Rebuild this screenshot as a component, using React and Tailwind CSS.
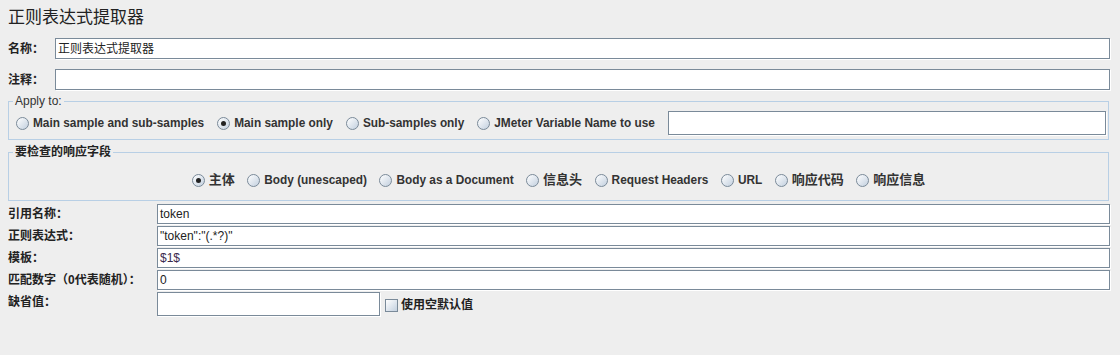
import React from "react";

const FONT = "font-['Liberation_Sans','Noto_Sans_CJK_SC',sans-serif]";

function Radio({ checked }) {
  return (
    <span className="inline-flex w-[13px] h-[13px] shrink-0 items-center justify-center rounded-full border border-[#7a8a99] bg-linear-to-br from-white to-[#c3d0df]">
      {checked && <span className="w-[5px] h-[5px] rounded-full bg-[#222]" />}
    </span>
  );
}

function RadioItem({ checked, children, size = "text-[11.85px]" }) {
  return (
    <label className={`flex items-center gap-[4px] ${size} font-bold text-[#333] leading-[14px] whitespace-nowrap`}>
      <Radio checked={checked} />
      <span>{children}</span>
    </label>
  );
}

function Field({ value, className = "", textClass = "text-[#222]" }) {
  return (
    <div
      className={`flex items-center border border-[#7a8a99] bg-white shadow-[1px_1px_0_#ffffff] px-[2px] text-[12px] leading-[14px] ${textClass} ${className}`}
    >
      {value}
    </div>
  );
}

function Row({ label, children, labelW = "w-[47px]" }) {
  return (
    <div className="flex items-center">
      <div className={`${labelW} shrink-0 text-[12px] font-bold text-[#222] leading-[14px] whitespace-nowrap`}>
        {label}
      </div>
      {children}
    </div>
  );
}

export default function App() {
  return (
    <div className={`w-[1120px] h-[355px] overflow-hidden bg-[#eeeeee] px-[8px] ${FONT}`}>
      <div className="h-[38px] pt-[6px] text-[17px] leading-[24px] text-[#222]">正则表达式提取器</div>

      <Row label="名称：">
        <Field value="正则表达式提取器" className="flex-1 h-[21px] mr-[2px]" />
      </Row>
      <div className="mt-[10px]">
        <Row label="注释：">
          <Field value="" className="flex-1 h-[21px] mr-[2px]" />
        </Row>
      </div>

      <fieldset className="mt-[4px] mr-[3px] border border-[#b8cfe5]">
        <legend className="ml-[4px] px-[2px] text-[12px] leading-[14px] text-[#333]">Apply to:</legend>
        <div className="flex items-center gap-[13px] pl-[7px] pr-[2px] pt-[3px] pb-[4px]">
          <RadioItem>Main sample and sub-samples</RadioItem>
          <RadioItem checked>Main sample only</RadioItem>
          <RadioItem>Sub-samples only</RadioItem>
          <RadioItem>JMeter Variable Name to use</RadioItem>
          <Field value="" className="flex-1 h-[24px]" />
        </div>
      </fieldset>

      <fieldset className="mt-[5px] mr-[3px] border border-[#b8cfe5]">
        <legend className="ml-[4px] px-[2px] text-[12px] font-bold leading-[14px] text-[#222]">要检查的响应字段</legend>
        <div className="flex items-center justify-center gap-[12.5px] pt-[14px] pb-[13px]">
          <RadioItem checked size="text-[13px]">主体</RadioItem>
          <RadioItem>Body (unescaped)</RadioItem>
          <RadioItem>Body as a Document</RadioItem>
          <RadioItem size="text-[13px]">信息头</RadioItem>
          <RadioItem>Request Headers</RadioItem>
          <RadioItem>URL</RadioItem>
          <RadioItem size="text-[13px]">响应代码</RadioItem>
          <RadioItem size="text-[13px]">响应信息</RadioItem>
        </div>
      </fieldset>

      <div className="mt-[3px] flex flex-col gap-[2px]">
        <Row label="引用名称：" labelW="w-[149px]">
          <Field value="token" className="flex-1 h-[20px] mr-[2px]" />
        </Row>
        <Row label="正则表达式：" labelW="w-[149px]">
          <Field value={'"token":"(.*?)"'} className="flex-1 h-[20px] mr-[2px]" />
        </Row>
        <Row label="模板：" labelW="w-[149px]">
          <Field value="$1$" textClass="text-[#3b2a4e]" className="flex-1 h-[20px] mr-[2px]" />
        </Row>
        <Row label="匹配数字（0代表随机）：" labelW="w-[149px]">
          <Field value="0" className="flex-1 h-[20px] mr-[2px]" />
        </Row>
        <div className="flex items-start">
          <div className="w-[149px] shrink-0 pt-[3px] text-[12px] font-bold text-[#222] leading-[14px]">缺省值：</div>
          <Field value="" className="w-[223px] h-[24px]" />
          <label className="ml-[5px] mt-[6px] flex items-center gap-[3px] text-[12px] font-bold leading-[14px] text-[#222]">
            <span className="w-[13px] h-[13px] border border-[#7a8a99] bg-linear-to-br from-white to-[#c3d0df]" />
            <span>使用空默认值</span>
          </label>
        </div>
      </div>
    </div>
  );
}
